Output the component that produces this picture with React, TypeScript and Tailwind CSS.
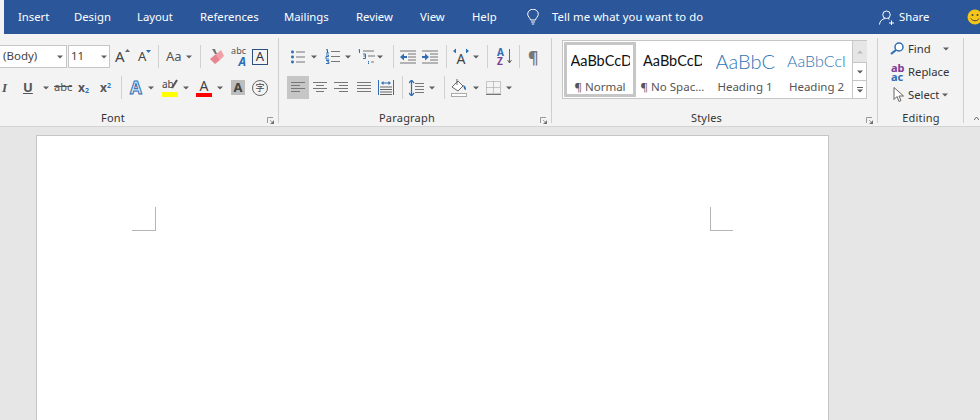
import React from "react";

const Caret = ({ className = "" }: { className?: string }) => (
  <svg width="6" height="4" viewBox="0 0 6 4" className={"shrink-0 " + className}><path d="M0 0.5h6L3 3.5z" fill="#5f5f5f" /></svg>
);
const Sep = ({ className = "" }: { className?: string }) => <div className={"w-px h-[23px] bg-[#d0d0d0] shrink-0 " + className} />;
const Launcher = () => (
  <svg width="7" height="7" viewBox="0 0 7 7" className="shrink-0"><path d="M0.5 6V0.5H6" fill="none" stroke="#9a9a9a" /><path d="M3 3l2.500 2.500M7 3.500V7H3.500z" fill="#6f6f6f" stroke="#6f6f6f" strokeWidth="0.6" /></svg>
);
const Lines = ({ rows, w = 14, color = "#777" }: { rows: [number, number][]; w?: number; color?: string }) => (
  <svg width={w} height="13" viewBox={`0 0 ${w} 13`} className="shrink-0">
    {rows.map(([a, b], i) => <rect key={i} x={a} y={1 + i * (rows.length > 4 ? 2.2 : 3)} width={b - a} height="1" fill={color} />)}
  </svg>
);
const Group = ({ label, className, children, launcher = true, labelClass = "" }: { label: string; className: string; children: React.ReactNode; launcher?: boolean; labelClass?: string }) => (
  <div className={"shrink-0 h-[85px] mt-[4px] border-r border-[#cfcfcf] flex flex-col " + className}>
    <div className="h-[73px] pt-[7px] shrink-0">{children}</div>
    <div className="flex-1 flex items-center relative">
      <div className={"flex-1 text-center text-[11px] tracking-[0.2px] text-[#333] leading-none " + labelClass}>{label}</div>
      {launcher && <div className="absolute right-[4px] top-[6px] flex"><Launcher /></div>}
    </div>
  </div>
);
const Row = ({ children, className = "" }: { children: React.ReactNode; className?: string }) => (
  <div className={"flex items-center h-[23px] " + className}>{children}</div>
);

const tabs: [string, string][] = [
  ["Insert", "w-[56px]"], ["Design", "w-[63px]"], ["Layout", "w-[63px]"], ["References", "w-[84px]"],
  ["Mailings", "w-[72px]"], ["Review", "w-[64px]"], ["View", "w-[52px]"], ["Help", "w-[55px]"],
];

const BulletIcon = () => (
  <svg width="14" height="14" viewBox="0 0 14 14" className="shrink-0">
    <g fill="#2f6db5"><rect x="0" y="0.5" width="3" height="3" rx="1.4" /><rect x="0" y="5.5" width="3" height="3" rx="1.4" /><rect x="0" y="10.5" width="3" height="3" rx="1.4" /></g>
    <g fill="#777"><rect x="5" y="1.5" width="9" height="1" /><rect x="5" y="6.5" width="9" height="1" /><rect x="5" y="11.5" width="9" height="1" /></g>
  </svg>
);
const NumberIcon = () => (
  <svg width="15" height="15" viewBox="0 0 15 15" className="shrink-0">
    <g fill="none" stroke="#2f6db5" strokeWidth="1"><path d="M1 1l1.500-.5V4M1 4h3" /><path d="M1 6h2.500v1.500H1V10h3" /><path d="M1 11.500h3L2.500 13H4v1.500H1" /></g>
    <g fill="#777"><rect x="6" y="2" width="9" height="1" /><rect x="6" y="7" width="9" height="1" /><rect x="6" y="12" width="9" height="1" /></g>
  </svg>
);
const MultiIcon = () => (
  <svg width="17" height="15" viewBox="0 0 17 15" className="shrink-0">
    <g fill="none" stroke="#2f6db5"><path d="M0.500 1l1-.5V4" /><path d="M5 5h2.500v2H5.500M7.500 7v2.500H5" /></g>
    <rect x="10" y="12" width="1" height="1" fill="#2f6db5" /><rect x="10" y="13.500" width="1" height="1.500" fill="#2f6db5" />
    <g fill="#777"><rect x="5" y="1.500" width="11" height="1" /><rect x="10" y="6.500" width="7" height="1" /><rect x="13" y="12.500" width="3" height="1" /></g>
  </svg>
);
const IndentIcon = ({ flip }: { flip?: boolean }) => (
  <svg width="16" height="14" viewBox="0 0 16 14" className="shrink-0">
    <g fill="#777"><rect x="0" y="0.500" width="16" height="1" /><rect x="0" y="12.500" width="16" height="1" /><rect x="8" y="3.500" width="8" height="1" /><rect x="8" y="6.500" width="8" height="1" /><rect x="8" y="9.500" width="8" height="1" /></g>
    {flip ? <path d="M0 6h3V3.500L7 7l-4 3.500V8H0z" fill="#2f6db5" /> : <path d="M7 6H4V3.500L0 7l4 3.500V8h3z" fill="#2f6db5" />}
  </svg>
);

export default function App() {
  return (
    <div className="w-[980px] h-[420px] overflow-hidden flex flex-col bg-[#e6e6e6] font-['Noto_Sans','Open_Sans',sans-serif]">
      <div className="h-[34px] shrink-0 bg-[#2b579a] flex items-center text-white text-[11.3px]">
        <div className="w-[4px] h-full bg-[#f3f3f3] mr-[14px] shrink-0" />
        {tabs.map(([t, w]) => <div key={t} className={"shrink-0 pt-px " + w}>{t}</div>)}
        <svg width="12" height="16" viewBox="0 0 12 16" className="shrink-0"><path d="M3.500 11C3 8.500 .7 7.800.7 5.200a5.300 5 0 0 1 10.600 0C11.300 7.800 9 8.500 8.500 11zM4 13h4M4.800 15h2.400" fill="none" stroke="#fff" /></svg>
        <div className="ml-[13px] w-[328px] shrink-0 pt-px tracking-[0.08px]">Tell me what you want to do</div>
        <svg width="15" height="15" viewBox="0 0 15 15" className="shrink-0 -ml-px"><path d="M7.500 1a3.500 3.500 0 0 1 0 7.500a3.500 3.500 0 0 1 0-7.500zM.5 14.500c0-3 2.500-5.500 5.500-6M9 8.500l1.500.7M10 13h5M12.500 10.500v5" fill="none" stroke="#fff" /></svg>
        <div className="ml-[5px] w-[68px] shrink-0 pt-px">Share</div>
        <svg width="16" height="16" viewBox="0 0 16 16" className="shrink-0"><circle cx="8" cy="8" r="7.500" fill="#f5c518" /><circle cx="5.500" cy="6" r="1" fill="#444" /><circle cx="10.500" cy="6" r="1" fill="#444" /><path d="M4 9.500c1 3 7 3 8 0" fill="none" stroke="#444" /></svg>
      </div>

      <div className="h-[93px] shrink-0 bg-[#f3f3f3] border-b border-[#d4d4d4] flex">
        <Group label="Font" className="w-[279px]" labelClass="pr-[52px]">
          <Row>
            <div className="w-[67px] h-[23px] bg-white border border-l-0 border-[#c6c6c6] flex items-center text-[11.5px] text-[#444]">
              <span className="ml-[3px] w-[54px] -mt-px">(Body)</span><Caret />
            </div>
            <div className="ml-px w-[42px] h-[23px] bg-white border border-[#c6c6c6] flex items-center text-[11.5px] text-[#444]">
              <span className="ml-[2px] w-[30px] -mt-px">11</span><Caret />
            </div>
            <span className="ml-[5px] w-[15px] flex items-start text-[15px] text-[#444] leading-none">A<svg width="5" height="3" viewBox="0 0 5 3" className="shrink-0"><path d="M0 3h5L2.500 0z" fill="#666" /></svg></span>
            <span className="ml-[8px] w-[14px] flex items-start text-[13px] text-[#444] leading-none">A<svg width="5" height="3" viewBox="0 0 5 3" className="shrink-0"><path d="M0 0h5L2.500 3z" fill="#2f6db5" /></svg></span>
            <Sep className="ml-[6px]" />
            <span className="ml-[7px] w-[19px] text-[13px] text-[#555]">Aa</span>
            <Caret className="ml-[1px]" />
            <Sep className="ml-[8px]" />
            <svg width="16" height="17" viewBox="0 0 16 17" className="shrink-0 ml-[8px]"><path d="M1 11l6-5 4 6-5 4z" fill="#e8858e" /><path d="M7 6l5-4 3 6-4 4z" fill="#f2a0a8" /><path d="M3 1h3l2 5H6z" fill="#777" /></svg>
            <span className="ml-[6px] w-[15px] flex flex-col items-end leading-none"><span className="text-[9px] text-[#555] h-[10px]">abc</span><span className="text-[12px] font-bold italic text-[#2f6db5] h-[11px]">A</span></span>
            <span className="ml-[6px] w-[16px] h-[16px] border border-[#2b4f81] flex items-center justify-center text-[13px] text-[#333] leading-none">A</span>
          </Row>
          <Row className="mt-[8px]">
            <span className="ml-[2px] w-[8px] text-[13px] font-['Liberation_Serif'] font-bold italic text-[#555]">I</span>
            <span className="ml-[13px] w-[11px] text-[13px] font-bold text-[#555] underline">U</span>
            <Caret className="ml-[9px]" />
            <span className="ml-[5px] w-[17px] text-[11px] text-[#555] line-through">abc</span>
            <span className="ml-[7px] w-[16px] text-[12px] font-bold text-[#555]">x<sub className="text-[7px] text-[#2f6db5]">2</sub></span>
            <span className="ml-[6px] w-[14px] text-[12px] font-bold text-[#555]">x<sup className="text-[7px] text-[#2f6db5]">2</sup></span>
            <Sep className="ml-[7px]" />
            <span className="ml-[8px] w-[15px] text-[17px] leading-none font-bold text-[#dcebf9] [-webkit-text-stroke:1px_#2f6db5]">A</span>
            <Caret className="ml-[3px]" />
            <span className="ml-[8px] w-[16px] h-[18px] flex flex-col leading-none relative">
              <span className="text-[10px] text-[#444] h-[13px]">ab</span>
              <svg width="8" height="11" viewBox="0 0 8 11" className="absolute right-0 top-0"><path d="M7 1L2 9" stroke="#555" strokeWidth="2" /></svg>
              <span className="w-[16px] h-[5px] bg-[#ffff00]" />
            </span>
            <Caret className="ml-[5px]" />
            <span className="ml-[7px] w-[16px] h-[18px] flex flex-col items-center leading-none"><span className="text-[14px] text-[#444] h-[14px]">A</span><span className="w-[16px] h-[4px] bg-[#ff0000]" /></span>
            <Caret className="ml-[5px]" />
            <span className="ml-[8px] w-[14px] h-[15px] bg-[#bdbdbd] flex items-center justify-center text-[13px] font-bold text-[#444] leading-none">A</span>
            <span className="ml-[7px] w-[16px] h-[16px] rounded-full border border-[#666] flex items-center justify-center text-[9px] text-[#444] leading-none font-['Noto_Sans_CJK_SC']">字</span>
          </Row>
        </Group>

        <Group label="Paragraph" className="w-[273px]" labelClass="pr-[16px]">
          <Row>
            <div className="ml-[12px] flex items-center"><BulletIcon /></div>
            <Caret className="ml-[6px]" />
            <div className="ml-[8px] flex"><NumberIcon /></div>
            <Caret className="ml-[5px]" />
            <div className="ml-[7px] flex"><MultiIcon /></div>
            <Caret className="ml-[2px]" />
            <Sep className="ml-[10px]" />
            <div className="ml-[6px] flex"><IndentIcon /></div>
            <div className="ml-[6px] flex"><IndentIcon flip /></div>
            <Sep className="ml-[8px]" />
            <span className="ml-[6px] w-[16px] flex items-center justify-center relative text-[14px] text-[#444] leading-none pt-[5px]">A<svg width="16" height="5" viewBox="0 0 16 5" className="absolute left-0 top-[1px]"><path d="M0 3l3-2.500v5zM16 3l-3-2.500v5z" fill="#2f6db5" /></svg></span>
            <Caret className="ml-[4px]" />
            <Sep className="ml-[8px]" />
            <span className="ml-[9px] w-[9px] flex flex-col text-[10px] font-bold leading-[9px]"><span className="text-[#2f6db5]">A</span><span className="text-[#7d3c98]">Z</span></span>
            <svg width="5" height="15" viewBox="0 0 5 15" className="shrink-0 ml-[1px]"><path d="M2.500 0v14M.5 11l2 3 2-3" fill="none" stroke="#666" /></svg>
            <Sep className="ml-[7px]" />
            <span className="ml-[8px] w-[12px] text-[16px] font-bold text-[#777] leading-none">¶</span>
          </Row>
          <Row className="mt-[8px]">
            <div className="ml-[8px] w-[22px] h-[23px] bg-[#c6c6c6] flex items-center justify-center"><Lines rows={[[0, 14], [0, 9], [0, 14], [0, 9]]} /></div>
            <div className="ml-[4px] flex"><Lines rows={[[0, 14], [3, 11], [0, 14], [3, 11]]} /></div>
            <div className="ml-[7px] flex"><Lines rows={[[0, 14], [5, 14], [0, 14], [5, 14]]} /></div>
            <div className="ml-[9px] flex"><Lines rows={[[0, 14], [0, 14], [0, 14], [0, 14]]} /></div>
            <svg width="16" height="15" viewBox="0 0 16 15" className="shrink-0 ml-[7px]"><g fill="#2f6db5"><rect x="0" y="0" width="1" height="15" /><rect x="15" y="0" width="1" height="15" /><path d="M3 3l2.500-2v1.500h5V1L13 3l-2.500 2V3.500h-5V5z" /></g><g fill="#666"><rect x="2" y="6.500" width="12" height="1" /><rect x="2" y="9" width="12" height="1" /><rect x="2" y="11.500" width="12" height="1" /><rect x="2" y="14" width="12" height="1" /></g></svg>
            <Sep className="ml-[8px]" />
            <svg width="15" height="16" viewBox="0 0 15 16" className="shrink-0 ml-[6px]"><path d="M2.500 0v16M0 3l2.500-3L5 3M0 13l2.500 3L5 13" fill="none" stroke="#2f6db5" strokeWidth="1.200" /><g fill="#777"><rect x="6" y="3" width="9" height="1" /><rect x="6" y="6" width="9" height="1" /><rect x="6" y="9" width="9" height="1" /><rect x="6" y="12" width="9" height="1" /></g></svg>
            <Caret className="ml-[5px]" />
            <Sep className="ml-[9px]" />
            <svg width="17" height="19" viewBox="0 0 17 19" className="shrink-0 ml-[6px]"><path d="M1 9l6-6 5 5-5 5z" fill="#fff" stroke="#666" /><path d="M6 1v6" stroke="#666" /><path d="M12 7c3 1 3 3 3 5-2 0-2-2-3-5z" fill="#2f6db5" /><rect x="0.500" y="15.500" width="15" height="3" fill="#fff" stroke="#aaa" /></svg>
            <Caret className="ml-[5px]" />
            <svg width="15" height="14" viewBox="0 0 15 14" className="shrink-0 ml-[7px]"><path d="M.5.5h14v12H.5zM7.500.5v12M.5 6.500h14" fill="none" stroke="#999" strokeDasharray="1 1" /><rect x="0" y="13" width="15" height="1" fill="#777" /></svg>
            <Caret className="ml-[5px]" />
          </Row>
        </Group>

        <Group label="Styles" className="w-[326px]" labelClass="pr-[16px]">
          <div className="ml-[10px] -mt-[5px] w-[305px] h-[59px] bg-white border border-[#c6c6c6] flex">
            <div className="w-[72px] h-[55px] mt-px ml-px shrink-0 border-[3px] border-[#c6c6c6] flex flex-col items-center overflow-hidden">
              <div className="w-[59px] h-[32px] overflow-hidden whitespace-nowrap font-['Lato'] text-[14.5px] text-[#111] leading-[32px]">AaBbCcD</div>
              <div className="text-[11.5px] text-[#555] leading-none mt-[4px]">¶ Normal</div>
            </div>
            <div className="w-[73px] h-[55px] mt-px shrink-0 border-[3px] border-white flex flex-col items-center overflow-hidden">
              <div className="w-[59px] h-[32px] overflow-hidden whitespace-nowrap font-['Lato'] text-[14.5px] text-[#111] leading-[32px]">AaBbCcD</div>
              <div className="text-[11.5px] text-[#555] leading-none mt-[4px] whitespace-nowrap">¶ No Spac...</div>
            </div>
            <div className="w-[72px] h-[55px] mt-px shrink-0 border-[3px] border-white flex flex-col items-center overflow-hidden">
              <div className="w-[59px] h-[32px] overflow-hidden whitespace-nowrap font-['Lato'] text-[20px] font-light text-[#2e74b5] leading-[32px]">AaBbC</div>
              <div className="text-[11.5px] text-[#555] leading-none mt-[4px]">Heading 1</div>
            </div>
            <div className="w-[71px] h-[55px] mt-px shrink-0 border-[3px] border-white flex flex-col items-center overflow-hidden">
              <div className="w-[59px] h-[32px] overflow-hidden whitespace-nowrap font-['Lato'] text-[16px] font-light text-[#2e74b5] leading-[32px]">AaBbCcI</div>
              <div className="text-[11.5px] text-[#555] leading-none mt-[4px]">Heading 2</div>
            </div>
            <div className="w-[15px] shrink-0 border-l border-[#c6c6c6] flex flex-col">
              <div className="h-[21px] bg-[#e6e6e6] flex items-center justify-center"><svg width="6" height="4" viewBox="0 0 6 4"><path d="M0 3.500h6L3 .5z" fill="#bbb" /></svg></div>
              <div className="h-[19px] border-y border-[#c6c6c6] flex items-center justify-center"><Caret /></div>
              <div className="flex-1 flex flex-col items-center justify-center gap-px"><div className="w-[6px] h-px bg-[#5f5f5f]" /><Caret /></div>
            </div>
          </div>
        </Group>

        <Group label="Editing" className="w-[86px]" launcher={false} labelClass="pl-px">
          <div className="text-[11.3px] text-[#333] leading-none -mt-[8px]">
            <Row>
              <svg width="14" height="13" viewBox="0 0 14 13" className="shrink-0 ml-[12px]"><circle cx="9" cy="5" r="4" fill="#fff" stroke="#2f6db5" strokeWidth="1.500" /><path d="M6 8l-5 4" stroke="#2f6db5" strokeWidth="2.200" /></svg>
              <span className="ml-[4px] w-[35px]">Find</span><Caret />
            </Row>
            <Row>
              <span className="ml-[11px] w-[18px] flex flex-col text-[11px] font-bold leading-[9px]"><span className="text-[#7d3c98] pl-[2px]">ab</span><span className="text-[#2f6db5] pl-[2px]">ac</span></span>
              <span className="ml-px">Replace</span>
            </Row>
            <Row>
              <svg width="12" height="15" viewBox="0 0 12 15" className="shrink-0 ml-[15px]"><path d="M1 .5v12l3-3 2 5 2-1-2-4.500h4.500z" fill="#fff" stroke="#666" /></svg>
              <span className="ml-[3px] w-[36px]">Select</span><Caret className="-ml-[2px]" />
            </Row>
          </div>
        </Group>
        <div className="flex-1 flex items-end justify-end pb-[6px] pr-px"><svg width="5" height="3" viewBox="0 0 5 3"><path d="M0 3l2.500-3L5 3" fill="none" stroke="#666" /></svg></div>
      </div>

      <div className="flex-1 pt-[8px] pl-[36px]">
        <div className="w-[793px] h-[400px] bg-white border border-[#c6c6c6] pt-[71px] px-[95px] flex justify-between items-start">
          <div className="w-[24px] h-[24px] border-r border-b border-[#b5b5b5]" />
          <div className="w-[23px] h-[24px] border-l border-b border-[#b5b5b5]" />
        </div>
      </div>
    </div>
  );
}
